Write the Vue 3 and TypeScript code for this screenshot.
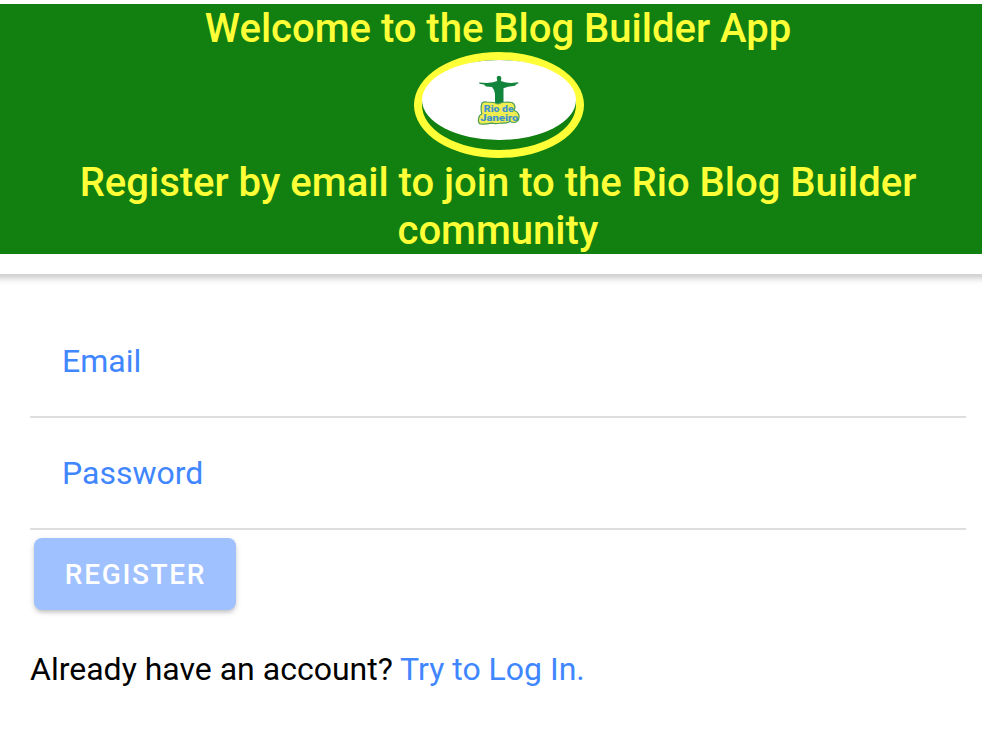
<template>
  <main class="page">
    <header class="header">
      <div class="banner">
        <h1>Welcome to the Blog Builder App</h1>
        <div class="logo">
          <svg viewBox="0 0 154 90" width="154" height="90" aria-label="Rio de Janeiro">
            <ellipse cx="77" cy="40" rx="77" ry="40" fill="#fff" />
            <path d="M57 22.500l8 .5 6-.7 4.200-1.300-.5-3 .5-1.500 1.800-.8 1.800.8.6 1.500-.5 3 4.100 1.300 6 .7 7-.7.5 1-2.500 1.200-1 1.300-7 1-4.500 1.500V46H73V34l-1-4-2-3-6-.5-2-2-4.500-.8z" fill="#12843c" />
            <path class="cloud" d="M60 43q2-1.500 5-1l7 .5 4 1.500 4-1.500 5-.5 5 .5q3 1.500 3 5l-1 3q4 1 5 5 .5 4-2 6-3 2-7 0-4 2-9 1.500-5 1-10 .2-5 1.200-11 .8-2.500-2-1.200-6 .3-3 3-4-1.500-6 .2-11z" />
            <text class="rio" x="76.800" y="52" textLength="30" lengthAdjust="spacingAndGlyphs">Rio de</text>
            <text class="rio" x="77.300" y="61.300" textLength="38" lengthAdjust="spacingAndGlyphs">Janeiro</text>
          </svg>
        </div>
        <h1>Register by email to join to the Rio Blog Builder community</h1>
      </div>
    </header>
    <form class="form" @submit.prevent>
      <label class="item">Email</label>
      <label class="item">Password</label>
      <button class="register" disabled>REGISTER</button>
      <p class="login">Already have an account? <a>Try to Log In.</a></p>
    </form>
  </main>
</template>

<script setup lang="ts">
</script>

<style>
body { margin: 0; background: #fff; }
</style>
<style scoped>
.page { font-family: Roboto, sans-serif; height: 738px; overflow: hidden; }
.header { padding: 4px 0 20px; }
.banner { box-sizing: border-box; height: 250px; padding: 0 30px 0 44px; background: #118011; color: #ffff38; text-align: center; }
h1 { box-sizing: border-box; margin: 0; padding-top: 1px; font-size: 40px; line-height: 48px; font-weight: 500; }
h1:first-child { height: 48px; }
.logo { box-sizing: border-box; width: 170px; height: 106px; margin: 0 auto; border: 8px solid #ffff38; border-radius: 50%; transform: translateX(1px); }
svg { display: block; }
.cloud { fill: #f0ed50; stroke: #4a9d58; stroke-width: 1.2px; stroke-linejoin: round; }
.rio { font: 900 9px Roboto, sans-serif; text-anchor: middle; fill: #3e94cc; }
.form { padding: 32px 16px 0 30px; background: linear-gradient(#d3d3d3 0, #d5d5d5 2px, #eaeaea 5px, #f8f8f8 8px, #fff 11px); }
.item { display: flex; align-items: center; box-sizing: border-box; height: 112px; padding-left: 32px; font-size: 32px; color: #4086ff; border-bottom: 2px solid #dedede; }
.register { display: block; width: 202px; height: 72px; margin: 8px 4px; padding: 0 0 0 1px; border: 0; border-radius: 8px; background: #9fc1ff; color: #fff; font: 500 28px Roboto, sans-serif; letter-spacing: 1.68px; box-shadow: 0 3px 4px -1px rgba(0,0,0,.17), 0 2px 6px rgba(0,0,0,.12); }
.login { margin: 40px 0 0; font-size: 32px; line-height: 38px; color: #000; }
.login a { color: #4086ff; }
</style>
